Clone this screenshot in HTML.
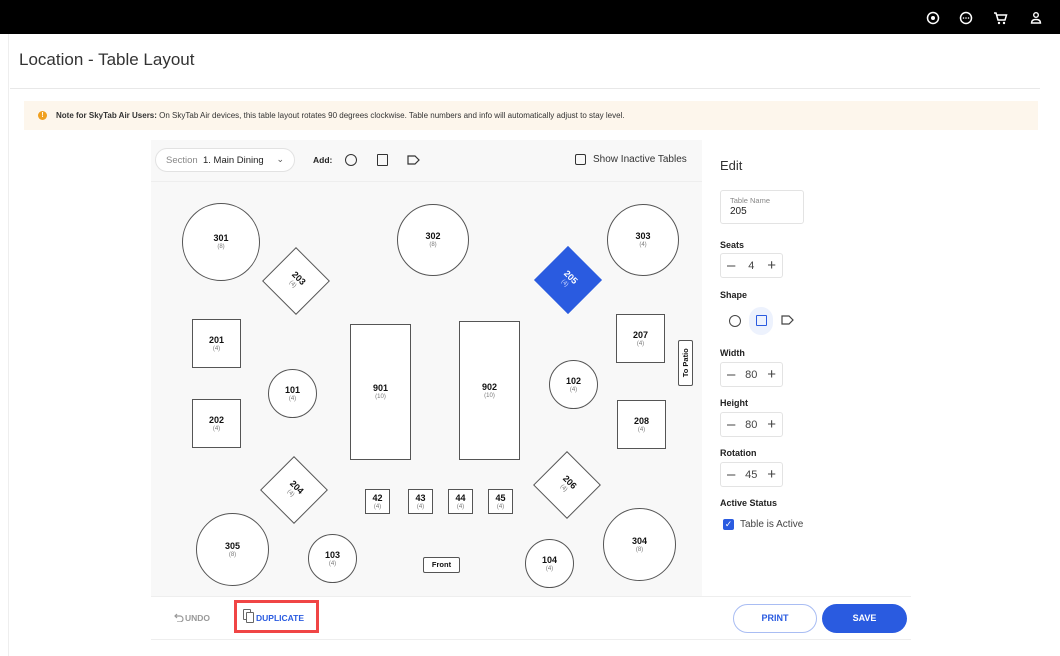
<!DOCTYPE html>
<html><head><meta charset="utf-8"><style>
*{box-sizing:border-box;margin:0;padding:0}
body{width:1060px;height:656px;overflow:hidden;background:#fff;font-family:"Liberation Sans",sans-serif;position:relative;color:#222}
.a{position:absolute}
.t{position:absolute;background:#fff;border:1px solid #555;display:flex;flex-direction:column;align-items:center;justify-content:center;line-height:1}
.t b{font-size:9px;color:#111}
.t i{font-style:normal;font-size:6px;color:#777;margin-top:1px}
.c{border-radius:50%}
.lbl{position:absolute;left:720px;font-size:9px;font-weight:bold;color:#222}
.st{position:absolute;left:720px;width:63px;height:25px;border:1px solid #e3e3e3;border-radius:3px;display:flex;align-items:center;justify-content:space-between;padding:0 6px;font-size:11px;color:#444}
.st span{font-size:15px;color:#444;font-weight:300}
</style></head><body>
<div class="a" style="left:0;top:0;width:1060px;height:34px;background:#000"></div>
<svg class="a" style="left:920px;top:8px" width="130" height="20" viewBox="0 0 130 20">
<circle cx="13" cy="10" r="5.5" fill="none" stroke="#fff" stroke-width="1.5"/><circle cx="13" cy="10" r="2" fill="#fff"/>
<circle cx="46" cy="10" r="5.5" fill="none" stroke="#fff" stroke-width="1.5"/><circle cx="43.5" cy="10" r=".8" fill="#fff"/><circle cx="46" cy="10" r=".8" fill="#fff"/><circle cx="48.5" cy="10" r=".8" fill="#fff"/>
<path d="M74 5h2l2 7h7l1.5-5H77" fill="none" stroke="#fff" stroke-width="1.5"/><circle cx="79" cy="15" r="1.2" fill="#fff"/><circle cx="84" cy="15" r="1.2" fill="#fff"/>
<circle cx="116" cy="7" r="2.3" fill="none" stroke="#fff" stroke-width="1.4"/><path d="M111.5 15c0-2.5 2-3.5 4.5-3.5s4.5 1 4.5 3.5z" fill="none" stroke="#fff" stroke-width="1.4"/>
</svg>
<div class="a" style="left:8px;top:34px;width:1px;height:622px;background:#eee"></div>
<div class="a" style="left:19px;top:50px;font-size:17px;color:#333">Location - Table Layout</div>
<div class="a" style="left:10px;top:88px;width:1030px;height:1px;background:#e8e8e8"></div>
<div class="a" style="left:24px;top:101px;width:1014px;height:29px;background:#fdf6ec"></div>
<div class="a" style="left:38px;top:111px;width:9px;height:9px;border-radius:50%;background:#f0a020;color:#fff;font-size:7px;font-weight:bold;text-align:center;line-height:9px">!</div>
<div class="a" style="left:56px;top:111px;font-size:8px;color:#333"><b>Note for SkyTab Air Users:</b> On SkyTab Air devices, this table layout rotates 90 degrees clockwise. Table numbers and info will automatically adjust to stay level.</div>

<div class="a" style="left:151px;top:140px;width:551px;height:456px;background:#f8f8f8"></div>
<div class="a" style="left:151px;top:181px;width:551px;height:1px;background:#eee"></div>
<div class="a" style="left:155px;top:148px;width:140px;height:24px;background:#fff;border:1px solid #e2e2e2;border-radius:12px;font-size:9.5px;padding:6px 10px;color:#222"><span style="color:#888">Section</span>&nbsp; 1. Main Dining<span style="position:absolute;right:10px;top:5px;color:#555;font-size:9px">&#8964;</span></div>
<div class="a" style="left:313px;top:155px;font-size:8.5px;font-weight:bold">Add:</div>
<div class="a" style="left:345px;top:154px;width:12px;height:12px;border:1.3px solid #333;border-radius:50%"></div>
<div class="a" style="left:377px;top:154px;width:11px;height:12px;border:1.3px solid #333;border-radius:1px"></div>
<svg class="a" style="left:407px;top:155px" width="13" height="10"><path d="M1 1h7l4 4-4 4H1z" fill="none" stroke="#333" stroke-width="1.2"/></svg>
<div class="a" style="left:575px;top:154px;width:11px;height:11px;border:1.3px solid #333;border-radius:2px"></div>
<div class="a" style="left:593px;top:154px;font-size:10px;color:#333">Show Inactive Tables</div>

<div class="t c" style="left:182px;top:203px;width:78px;height:78px"><b>301</b><i>(8)</i></div>
<div class="t c" style="left:397px;top:204px;width:72px;height:72px"><b>302</b><i>(8)</i></div>
<div class="t c" style="left:607px;top:204px;width:72px;height:72px"><b>303</b><i>(4)</i></div>
<div class="t" style="left:272px;top:257px;width:48px;height:48px;transform:rotate(45deg)"><b>203</b><i>(4)</i></div>
<div class="t" style="left:544px;top:256px;width:48px;height:48px;transform:rotate(45deg);background:#2a5be0;border-color:#2a5be0"><b style="color:#fff">205</b><i style="color:#cfd9ff">(4)</i></div>
<div class="t" style="left:192px;top:319px;width:49px;height:49px"><b>201</b><i>(4)</i></div>
<div class="t" style="left:192px;top:399px;width:49px;height:49px"><b>202</b><i>(4)</i></div>
<div class="t c" style="left:268px;top:369px;width:49px;height:49px"><b>101</b><i>(4)</i></div>
<div class="t" style="left:350px;top:324px;width:61px;height:136px"><b>901</b><i>(10)</i></div>
<div class="t" style="left:459px;top:321px;width:61px;height:139px"><b>902</b><i>(10)</i></div>
<div class="t c" style="left:549px;top:360px;width:49px;height:49px"><b>102</b><i>(4)</i></div>
<div class="t" style="left:616px;top:314px;width:49px;height:49px"><b>207</b><i>(4)</i></div>
<div class="t" style="left:678px;top:340px;width:15px;height:46px;border-radius:2px"><b style="transform:rotate(-90deg);white-space:nowrap;font-size:7.5px">To Patio</b></div>
<div class="t" style="left:617px;top:400px;width:49px;height:49px"><b>208</b><i>(4)</i></div>
<div class="t" style="left:270px;top:466px;width:48px;height:48px;transform:rotate(45deg)"><b>204</b><i>(4)</i></div>
<div class="t" style="left:543px;top:461px;width:48px;height:48px;transform:rotate(45deg)"><b>206</b><i>(4)</i></div>
<div class="t" style="left:365px;top:489px;width:25px;height:25px"><b>42</b><i>(4)</i></div>
<div class="t" style="left:408px;top:489px;width:25px;height:25px"><b>43</b><i>(4)</i></div>
<div class="t" style="left:448px;top:489px;width:25px;height:25px"><b>44</b><i>(4)</i></div>
<div class="t" style="left:488px;top:489px;width:25px;height:25px"><b>45</b><i>(4)</i></div>
<div class="t c" style="left:196px;top:513px;width:73px;height:73px"><b>305</b><i>(8)</i></div>
<div class="t c" style="left:308px;top:534px;width:49px;height:49px"><b>103</b><i>(4)</i></div>
<div class="t" style="left:423px;top:557px;width:37px;height:16px;border-radius:2px"><b style="font-size:7.5px">Front</b></div>
<div class="t c" style="left:525px;top:539px;width:49px;height:49px"><b>104</b><i>(4)</i></div>
<div class="t c" style="left:603px;top:508px;width:73px;height:73px"><b>304</b><i>(8)</i></div>

<div class="a" style="left:720px;top:158px;font-size:13px;color:#333">Edit</div>
<div class="a" style="left:720px;top:190px;width:84px;height:34px;border:1px solid #e3e3e3;border-radius:3px;padding:6px 9px;line-height:1"><div style="font-size:7.5px;color:#888">Table Name</div><div style="font-size:10px;color:#222;margin-top:2px">205</div></div>
<div class="lbl" style="top:240px">Seats</div>
<div class="st" style="top:253px"><span>&#8211;</span>4<span>+</span></div>
<div class="lbl" style="top:290px">Shape</div>
<div class="a" style="left:729px;top:315px;width:12px;height:12px;border:1.3px solid #444;border-radius:50%"></div>
<div class="a" style="left:749px;top:307px;width:24px;height:28px;border-radius:12px;background:#edf2fd"></div>
<div class="a" style="left:756px;top:315px;width:11px;height:11px;border:1.3px solid #2a5be0;border-radius:1px"></div>
<svg class="a" style="left:781px;top:315px" width="13" height="10"><path d="M1 1h7l4 4-4 4H1z" fill="none" stroke="#444" stroke-width="1.2"/></svg>
<div class="lbl" style="top:348px">Width</div>
<div class="st" style="top:362px"><span>&#8211;</span>80<span>+</span></div>
<div class="lbl" style="top:398px">Height</div>
<div class="st" style="top:412px"><span>&#8211;</span>80<span>+</span></div>
<div class="lbl" style="top:448px">Rotation</div>
<div class="st" style="top:462px"><span>&#8211;</span>45<span>+</span></div>
<div class="lbl" style="top:498px">Active Status</div>
<div class="a" style="left:723px;top:519px;width:11px;height:11px;background:#2a5be0;border-radius:2px;color:#fff;font-size:9px;line-height:11px;text-align:center">&#10003;</div>
<div class="a" style="left:740px;top:519px;font-size:10px;color:#444">Table is Active</div>

<div class="a" style="left:151px;top:596px;width:760px;height:1px;background:#eee"></div>
<div class="a" style="left:151px;top:639px;width:760px;height:1px;background:#eee"></div>
<svg class="a" style="left:174px;top:612px" width="10" height="10"><path d="M3 2L1 4l2 2M1 4h5a3 3 0 010 6H3" fill="none" stroke="#999" stroke-width="1.2"/></svg>
<div class="a" style="left:185px;top:613px;font-size:8.5px;font-weight:bold;color:#999">UNDO</div>
<div class="a" style="left:234px;top:600px;width:85px;height:33px;border:3px solid #f04545"></div>
<div class="a" style="left:243px;top:609px;width:8px;height:11px;border:1.3px solid #666;border-radius:1px"></div>
<div class="a" style="left:246px;top:612px;width:8px;height:11px;border:1.3px solid #666;border-radius:1px;background:#fff"></div>
<div class="a" style="left:256px;top:613px;font-size:8.5px;font-weight:bold;color:#2a5be0">DUPLICATE</div>
<div class="a" style="left:733px;top:604px;width:84px;height:29px;border:1px solid #a9bdf3;border-radius:15px;font-size:9px;font-weight:bold;color:#2a5be0;text-align:center;line-height:27px">PRINT</div>
<div class="a" style="left:822px;top:604px;width:85px;height:29px;background:#2a5be0;border-radius:15px;font-size:9px;font-weight:bold;color:#fff;text-align:center;line-height:29px">SAVE</div>
</body></html>
